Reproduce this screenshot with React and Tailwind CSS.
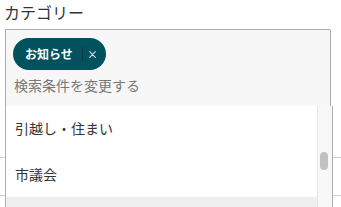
import React from 'react';

const items = ['引越し・住まい', '市議会', 'イベント'];

const App = () => {
  return (
    <div
      className="relative w-[341px] h-[207px] overflow-hidden bg-white text-[#333]"
      style={{ fontFamily: '"Noto Sans CJK JP", "Noto Sans", sans-serif' }}
    >
      {/* Label */}
      <div className="pl-[4px] pt-[1px] h-[29px] text-[16px] leading-[22px]">カテゴリー</div>

      {/* Select field */}
      <div className="ml-[5px] w-[326px] h-[78px] border border-[#adadad] rounded-tr-[2px] bg-[#f7f7f7] pl-[7px] pt-[8px]">
        <div className="inline-flex items-center h-[32px] rounded-full bg-[#01525e] pl-[12px] pr-[10px] text-white">
          <span className="text-[12px] font-bold leading-none">お知らせ</span>
          <span className="ml-[9px] h-[14px] w-px bg-black/30" />
          <svg viewBox="0 0 10 10" className="ml-[6px] w-[7px] h-[7px]" stroke="#cfdfe2" strokeWidth="1.6" strokeLinecap="round">
            <path d="M1 1L9 9M9 1L1 9" />
          </svg>
        </div>
        <div className="mt-[5px] pl-[1px] text-[14px] leading-[20px] text-[#777]">検索条件を変更する</div>
      </div>

      {/* Content behind the menu */}
      <div className="h-[51px] border-b border-[#cfcfcf]" />
      <div className="h-[38px] border-b border-[#cfcfcf]" />

      {/* Dropdown menu */}
      <div className="absolute left-[5px] top-[106px] w-[328px] h-[110px] flex border-l border-r border-[#adadad] bg-white">
        <div className="flex-1 flex flex-col">
          {items.map((item, i) => (
            <div
              key={item}
              className={`h-[45.5px] shrink-0 flex items-center pl-[9px] text-[14px] ${i === 2 ? 'bg-[#efefef]' : ''}`}
            >
              {i < 2 ? item : ''}
            </div>
          ))}
        </div>
        <div className="w-[15px] border-l border-[#e6e6e6] bg-[#f8f8f8] pt-[46px] pl-[2px]">
          <div className="w-[8px] h-[18px] rounded-full bg-[#c1c1c1]" />
        </div>
      </div>
    </div>
  );
};

export default App;
